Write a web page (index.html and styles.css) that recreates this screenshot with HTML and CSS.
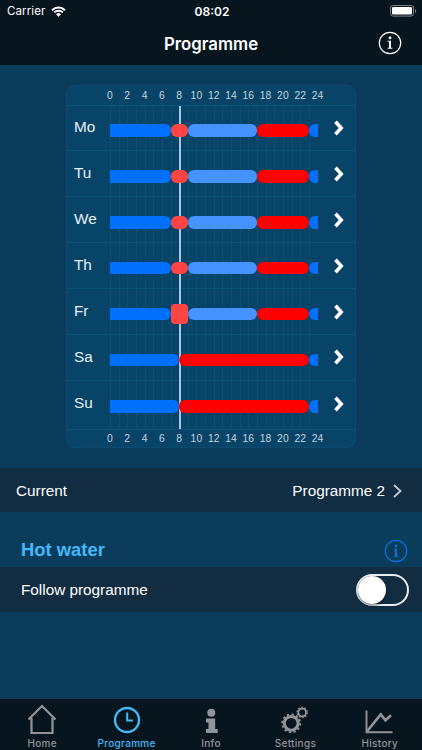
FILE: index.html
```html
<!DOCTYPE html>
<html lang="en">
<head>
    <meta charset="UTF-8">
    <meta name="viewport" content="width=device-width, initial-scale=1.0">
    <title>Programme</title>
    <link rel="stylesheet" href="styles.css">
</head>
<body>
    <header class="header">
        <div class="status">
            <div class="carrier">
                <span>Carrier</span>
                <svg class="wifi" viewBox="0 0 15 11"><path d="M1 4.2a9.4 9.4 0 0 1 13 0M3.2 6.4a6.2 6.2 0 0 1 8.6 0" fill="none" stroke="#fff" stroke-width="2"/><path d="M7.5 10.8 5 8.2a3.6 3.6 0 0 1 5 0z" fill="#fff"/></svg>
            </div>
            <span class="time">08:02</span>
            <svg class="battery" viewBox="0 0 27 12"><rect x=".5" y=".5" width="23" height="10.6" rx="2.6" fill="none" stroke="#7b838a"/><rect x="2" y="2" width="20" height="7.6" rx="1.3" fill="#fff"/><path d="M25 4v4c1.6-.6 1.6-3.4 0-4z" fill="#7b838a"/></svg>
        </div>
        <div class="titlebar">
            <h1>Programme</h1>
            <svg class="info" viewBox="0 0 24 24"><use href="#info-shape"/></svg>
        </div>
    </header>

    <main>
        <section class="schedule">
            <div class="hours"></div>
            <div class="days">
                <div class="now"></div>
            </div>
            <div class="hours"></div>
        </section>

        <div class="row current">
            <span>Current</span>
            <span class="value">Programme 2
                <svg viewBox="0 0 9 14"><path d="m1 1 6.5 6L1 13" fill="none" stroke="#c3cbd1" stroke-width="1.8"/></svg>
            </span>
        </div>

        <div class="section-title">
            <h2>Hot water</h2>
            <svg class="info blue" viewBox="0 0 24 24">
                <g id="info-shape">
                    <circle cx="12" cy="12" r="10.7" fill="none" stroke="currentColor" stroke-width="1.2"/>
                    <circle cx="12" cy="6.9" r="1.4" fill="currentColor"/>
                    <path d="M9.7 9.8H13v6.9h1.3v1H9.7v-1H11v-5.9H9.7z" fill="currentColor"/>
                </g>
            </svg>
        </div>

        <div class="row follow">
            <span>Follow programme</span>
            <div class="toggle"><div class="knob"></div></div>
        </div>
    </main>

    <nav class="tabs">
        <div class="tab">
            <svg viewBox="0 0 32 32"><path d="M2.5 17.5 16 4l13.5 13.5M5.5 16v15h21V16" fill="none" stroke="currentColor" stroke-width="2.2"/></svg>
            <span>Home</span>
        </div>
        <div class="tab active">
            <svg viewBox="0 0 32 32"><circle cx="16" cy="18" r="12" fill="none" stroke="currentColor" stroke-width="2.4"/><path d="M16.2 10.5v8H22" fill="none" stroke="currentColor" stroke-width="2"/></svg>
            <span>Programme</span>
        </div>
        <div class="tab">
            <svg viewBox="0 0 32 32"><circle cx="16.3" cy="10.8" r="4" fill="currentColor"/><path d="M11 16.500h9.200v10.500h2.500V31H11v-4h2.500v-6.500H11z" fill="currentColor"/></svg>
            <span>Info</span>
        </div>
        <div class="tab">
            <svg viewBox="0 0 32 32" fill="none" stroke="currentColor">
                <circle cx="12.2" cy="21.3" r="6.9" stroke-width="3"/>
                <circle cx="12.2" cy="21.3" r="9" stroke-width="1.8" stroke-dasharray="2.35 2.362"/>
                <circle cx="23.2" cy="10.500" r="3.900" stroke-width="1.900"/>
                <circle cx="23.2" cy="10.500" r="5.100" stroke-width="1.300" stroke-dasharray="1.6 1.604"/>
            </svg>
            <span>Settings</span>
        </div>
        <div class="tab">
            <svg viewBox="0 0 32 32" fill="none" stroke="currentColor"><path d="M2.500 8.500v21.700h26" stroke-width="1.900"/><path d="m3.300 29 13.500-16.500 4.700 5.800 5.500-5" stroke-width="2.700"/></svg>
            <span>History</span>
        </div>
    </nav>

    <script>
        const weekday = [[0, 7, 'low'], [7, 9, 'warm'], [9, 17, 'mid'], [17, 23, 'high'], [23, 24, 'low']];
        const weekend = [[0, 8, 'low'], [8, 23, 'high'], [23, 24, 'low']];
        const days = { Mo: weekday, Tu: weekday, We: weekday, Th: weekday, Fr: weekday, Sa: weekend, Su: weekend };

        document.querySelectorAll('.hours').forEach(el => {
            for (let h = 0; h <= 24; h += 2) {
                el.innerHTML += `<span>${h}</span>`;
            }
        });

        const list = document.querySelector('.days');
        for (const day in days) {
            // Segment widths follow the number of hours
            const bars = days[day].map(([from, to, type]) => {
                const selected = day === 'Fr' && type === 'warm' ? ' selected' : '';
                return `<div class="bar ${type}${selected}" style="width: ${(to - from) / 24 * 100}%"></div>`;
            }).join('');
            list.insertAdjacentHTML('beforeend', `
                <div class="day">
                    <span class="name">${day}</span>
                    <div class="track">${bars}</div>
                    <svg class="arrow" viewBox="0 0 10 16"><path d="m1.5 1.7 5.7 6.3-5.7 6.3" fill="none" stroke="#fff" stroke-width="3.6"/></svg>
                </div>`);
        }
    </script>
</body>
</html>
```
FILE: styles.css
```css
* {
    box-sizing: border-box;
}
body {
    margin: 0;
    height: 750px;
    display: flex;
    flex-direction: column;
    overflow: hidden;
    background: #0c3c5c;
    color: #fff;
    font-family: "Liberation Sans", Arial, sans-serif;
}
h1, h2 {
    margin: 0;
}
.header {
    height: 65px;
    background: #07151f;
    font-family: Inter, sans-serif;
}
.status {
    height: 22px;
    padding: 0 5px 0 7px;
    display: grid;
    grid-template-columns: 1fr auto 1fr;
    align-items: center;
    font-size: 11.5px;
}
.carrier {
    display: flex;
    align-items: center;
    gap: 6px;
    letter-spacing: 0.1px;
}
.wifi {
    width: 15px;
    height: 11px;
}
.time {
    font-weight: 600;
    font-size: 12px;
}
.battery {
    width: 27px;
    height: 12px;
    justify-self: end;
}
.titlebar {
    height: 43px;
    padding: 0 20px;
    display: grid;
    grid-template-columns: 1fr auto 1fr;
    align-items: center;
}
.titlebar h1 {
    grid-column: 2;
    font-size: 16.8px;
    font-weight: 600;
    line-height: 20px;
}
.info {
    width: 24px;
    height: 24px;
    justify-self: end;
}
.titlebar .info {
    margin-top: -1px;
}
.blue {
    color: #0a73e0;
}
main {
    flex: 1;
}
.schedule {
    width: 290px;
    height: 363px;
    margin: 20px 0 0 66px;
    border: 1px solid #0b4b70;
    border-radius: 9px;
    background: #084467;
}
.hours {
    height: 18.5px;
    margin-left: 34.3px;
    display: flex;
    align-items: center;
    font-size: 10.3px;
    letter-spacing: 0.1px;
    color: #c5d5df;
}
.hours span {
    width: 17.3px;
    flex: none;
    text-align: center;
}
.days {
    position: relative;
    height: 325px;
    border-top: 1px solid #0b5075;
    border-bottom: 1px solid #0b5075;
}
.now {
    position: absolute;
    left: 112px;
    top: 0;
    width: 2px;
    height: 100%;
    background: #a5c7dc;
}
.day {
    height: 45.9px;
    display: flex;
    align-items: center;
    border-bottom: 1px solid #0b5075;
}
.day:last-child {
    border-bottom: none;
}
.name {
    width: 43px;
    padding: 0 0 1px 7px;
    font-size: 15.3px;
    color: #e4f0f7;
}
.track {
    width: 207.7px;
    height: 100%;
    display: flex;
    align-items: center;
    padding-top: 5px;
    background: repeating-linear-gradient(90deg, #0b4d71 0 1px, transparent 1px 8.65px);
}
/* keeps the bars above the current time line */
.bar {
    position: relative;
    height: 12.6px;
    border-radius: 6px;
}
.bar:first-child {
    border-radius: 0 6px 6px 0;
}
.bar:last-child {
    border-radius: 6px 0 0 6px;
}
.low {
    background: #0070ff;
}
.mid {
    background: #4593ff;
}
.warm {
    background: #ff4444;
}
.high {
    background: #ff0000;
}
.bar.selected {
    height: 20px;
    border-radius: 4px;
}
.arrow {
    width: 10px;
    height: 16px;
    margin-left: 16px;
}
.row {
    height: 45px;
    display: flex;
    align-items: center;
    justify-content: space-between;
    background: #122c42;
    font-size: 15.3px;
}
.current {
    height: 44px;
    margin-top: 20px;
    padding: 2px 20px 0 16px;
}
.value {
    display: flex;
    align-items: center;
    gap: 8px;
}
.value svg {
    width: 9px;
    height: 14px;
}
.section-title {
    height: 55px;
    padding: 21px 14px 0 21px;
    display: flex;
    align-items: center;
    justify-content: space-between;
}
.section-title h2 {
    font-size: 18.4px;
    color: #43b9f9;
}
.section-title .info {
    margin-top: 2px;
}
.follow {
    padding: 0 13px 0 21px;
}
.toggle {
    width: 53px;
    height: 32px;
    border: 2px solid #e9edf0;
    border-radius: 16px;
}
.knob {
    width: 28px;
    height: 28px;
    border-radius: 50%;
    background: #fff;
    box-shadow: 0 2px 3px #0006;
}
.tabs {
    height: 51px;
    display: flex;
    background: #07151f;
    color: #929598;
    font-family: Inter, sans-serif;
    font-size: 10px;
}
.tab {
    flex: 1;
    padding-top: 3px;
    display: flex;
    flex-direction: column;
    align-items: center;
    gap: 3px;
    font-weight: 500;
    letter-spacing: 0.3px;
}
.tab svg {
    width: 32px;
    height: 32px;
}
.active {
    color: #43b9f9;
}
```
